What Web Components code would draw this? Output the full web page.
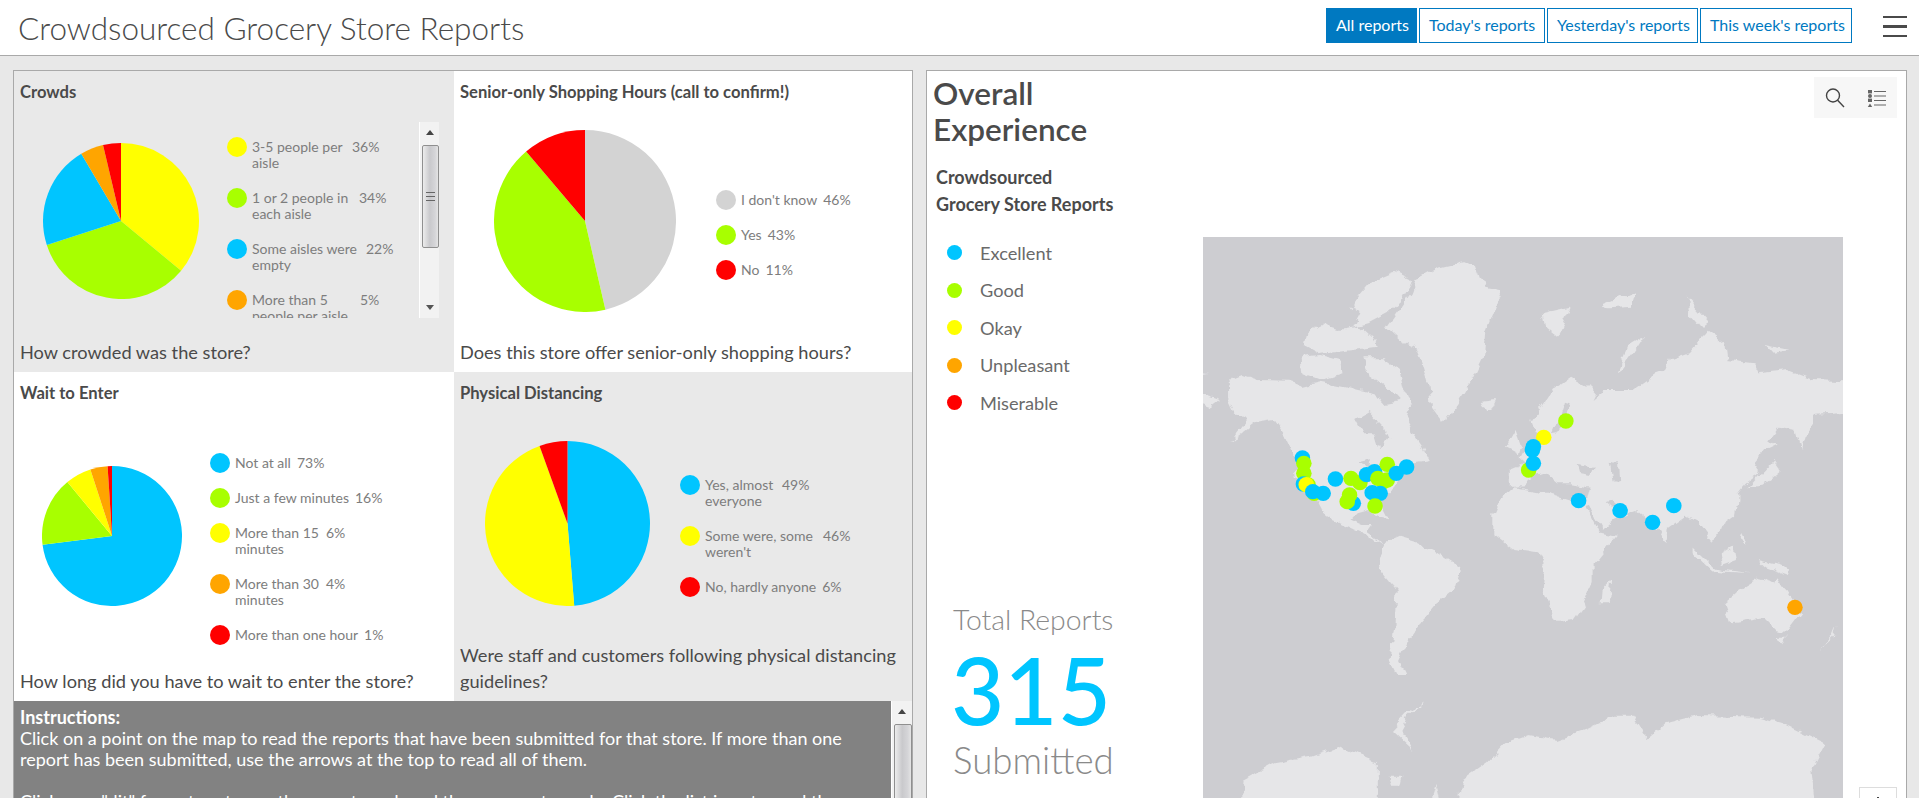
<!DOCTYPE html>
<html>
<head>
<meta charset="utf-8">
<title>Crowdsourced Grocery Store Reports</title>
<style>
  html,body{ margin:0; height:100%; overflow:hidden; background:#e8e8e8; }
  body{ font-family:Lato,"Liberation Sans",sans-serif; color:#4a4a4a; }
</style>
</head>
<body>

<app-shell>
  <report-header slot="header"></report-header>

  <chart-grid slot="left">
    <chart-card tone="grey" title="Crowds" note="How crowded was the store?" pie-left="29" pie-size="156" legend-gap="28"
      values="36,34,21.5,4.8,3.7" colors="yellow,green,blue,orange,red" scroll>
      <legend-row color="yellow" pct="36%" width="94">3-5 people per aisle</legend-row>
      <legend-row color="green" pct="34%" width="101">1 or 2 people in each aisle</legend-row>
      <legend-row color="blue" pct="22%" width="108">Some aisles were empty</legend-row>
      <legend-row color="orange" pct="5%" width="102">More than 5 people per aisle</legend-row>
      <legend-row color="red" pct="4%" width="102">Too many people</legend-row>
    </chart-card>
    <chart-card title="Senior-only Shopping Hours (call to confirm!)" note="Does this store offer senior-only shopping hours?" pie-left="40" pie-size="182" legend-gap="40" legend-top="28"
      values="46.4,42.4,11.2" colors="gray,green,red">
      <legend-row color="gray" pct="46%">I don't know</legend-row>
      <legend-row color="green" pct="43%">Yes</legend-row>
      <legend-row color="red" pct="11%">No</legend-row>
    </chart-card>
    <chart-card title="Wait to Enter" note="How long did you have to wait to enter the store?" pie-left="28" pie-size="140" legend-gap="28"
      values="73,16,6,4,1" colors="blue,green,yellow,orange,red">
      <legend-row color="blue" pct="73%">Not at all</legend-row>
      <legend-row color="green" pct="16%">Just a few minutes</legend-row>
      <legend-row color="yellow" pct="6%" width="85">More than 15 minutes</legend-row>
      <legend-row color="orange" pct="4%" width="85">More than 30 minutes</legend-row>
      <legend-row color="red" pct="1%">More than one hour</legend-row>
    </chart-card>
    <chart-card tone="grey" title="Physical Distancing" note="Were staff and customers following physical distancing guidelines?" pie-left="31" pie-size="165" legend-gap="30"
      values="48.7,45.8,5.5" colors="blue,yellow,red">
      <legend-row color="blue" pct="49%" width="71">Yes, almost everyone</legend-row>
      <legend-row color="yellow" pct="46%" width="112">Some were, some weren't</legend-row>
      <legend-row color="red" pct="6%">No, hardly anyone</legend-row>
    </chart-card>
    <info-panel>
      <b>Instructions:</b><br>
      Click on a point on the map to read the reports that have been submitted for that store. If more than one report has been submitted, use the arrows at the top to read all of them.<br><br>
      Click on a "dit" for a store to see the reports and read the comments made. Click the list icon to read them.
    </info-panel>
  </chart-grid>

  <map-panel slot="right"></map-panel>
</app-shell>

<template id="fake-scrollbar-tpl">
  <style>
    :host{ display:block; flex:none; width:var(--bar-w,20px); background:#f2f2f2; border-left:1px solid #fff; box-sizing:border-box; position:relative; }
    .arrow{ position:absolute; left:50%; margin-left:-4px; width:0; height:0; border-left:4px solid transparent; border-right:4px solid transparent; }
    .up{ top:8px; border-bottom:5px solid #444; }
    .down{ bottom:8px; border-top:5px solid #555; }
    .thumb{ position:absolute; left:2px; right:0; top:var(--thumb-top,23px); height:var(--thumb-h,103px); box-sizing:border-box; border:1px solid #8f8f8f; border-radius:2px;
      background:linear-gradient(90deg,#ececec,#c9c9cc 45%,#d5d5d8 80%,#e4e4e4); display:grid; place-items:center; }
    .grip{ width:9px; height:7px; border-top:1px solid #666; border-bottom:1px solid #666; position:relative; }
    .grip::after{ content:""; position:absolute; left:0; right:0; top:3px; height:1px; background:#666; }
  </style>
  <div class="arrow up"></div>
  <div class="thumb"><div class="grip"></div></div>
  <div class="arrow down"></div>
</template>

<script>
const COLORS = {
  yellow:"#ffff00", green:"#a8ff00", blue:"#00c5ff",
  orange:"#ffa500", red:"#ff0000", gray:"#d3d3d3"
};

class AppShell extends HTMLElement {
  constructor(){
    super();
    this.attachShadow({ mode:"open" });
    this.shadowRoot.innerHTML = `
      <style>
        :host{ display:block; height:798px; overflow:hidden; }
        .main{
          display:grid;
          grid-template-columns:900px 981px;
          column-gap:13px;
          padding:14px 12px 0 13px;
          align-items:start;
        }
      </style>
      <slot name="header"></slot>
      <div class="main">
        <slot name="left"></slot>
        <slot name="right"></slot>
      </div>
    `;
  }
}

class ReportHeader extends HTMLElement {
  constructor(){
    super();
    this.attachShadow({ mode:"open" });
    this.shadowRoot.innerHTML = `
      <style>
        :host{
          display:flex;
          align-items:center;
          height:55px;
          background:#fff;
          border-top:1px solid #e6e6e6;
          border-bottom:1px solid #a9a9a9;
          padding:0 12px 0 18px;
          margin-top:-1px;
        }
        h1{ margin:0; flex:1; font-size:31.5px; font-weight:300; color:#4a4a4a; white-space:nowrap; }
        nav{ display:flex; gap:2px; margin:-4px 31px 0 0; }
        a{
          display:block;
          box-sizing:border-box;
          height:35px;
          line-height:32px;
          padding:0 9px;
          font-size:16px;
          color:#0079c1;
          background:#fff;
          border:1px solid #0079c1;
          white-space:nowrap;
        }
        a.on{ background:#0079c1; color:#fff; }
        .burger{ display:grid; row-gap:7px; width:24px; margin-top:-2px; }
        .burger i{ display:block; height:2.5px; background:#4a4a4a; }
      </style>
      <h1>Crowdsourced Grocery Store Reports</h1>
      <nav>
        <a class="on" style="width:91px">All reports</a>
        <a style="width:126px">Today's reports</a>
        <a style="width:151px">Yesterday's reports</a>
        <a style="width:152px">This week's reports</a>
      </nav>
      <div class="burger"><i></i><i></i><i></i></div>
    `;
  }
}

class ChartGrid extends HTMLElement {
  constructor(){
    super();
    this.attachShadow({ mode:"open" });
    this.shadowRoot.innerHTML = `
      <style>
        :host{
          display:grid;
          grid-template-columns:440px 458px;
          grid-template-rows:301px 329px 1fr;
          width:900px;
          height:745px;
          box-sizing:border-box;
          border:1px solid #a9a9a9;
          background:#fff;
          overflow:hidden;
        }
        ::slotted(info-panel){ grid-column:1 / 3; }
      </style>
      <slot></slot>
    `;
  }
}

class ChartCard extends HTMLElement {
  constructor(){
    super();
    this.attachShadow({ mode:"open" });
    this.shadowRoot.innerHTML = `
      <style>
        :host{
          display:flex;
          flex-direction:column;
          min-width:0;
          padding:0 6px;
          background:#fff;
        }
        :host([tone="grey"]){ background:#e9e9e9; }
        h2{
          margin:0;
          height:44px;
          line-height:42px;
          font-size:16.6px;
          font-weight:700;
          color:#4a4a4a;
          white-space:nowrap;
        }
        .chart{
          flex:1;
          min-height:0;
          display:flex;
          align-items:center;
          margin:0 -6px;
        }
        svg{ display:block; flex:none; }
        .legend{ display:grid; row-gap:19px; margin-top:26px; }
        .view{
          display:flex;
          height:196px;
          align-self:flex-start;
          margin-top:7px;
          flex:1;
          margin-right:15px;
        }
        .view .clip{ flex:1; overflow:hidden; margin-left:-2px; padding-left:2px; }
        .view .legend{ margin-top:17px; }
        p{
          margin:0;
          padding:12px 0 7px;
          font-size:18.2px;
          line-height:26px;
          color:#4a4a4a;
        }
      </style>
      <h2></h2>
      <div class="chart"></div>
      <p></p>
    `;
  }

  connectedCallback(){
    const root = this.shadowRoot;
    root.querySelector("h2").textContent = this.getAttribute("title");
    this.removeAttribute("title");
    root.querySelector("p").textContent = this.getAttribute("note");

    const size = +this.getAttribute("pie-size");
    const chart = root.querySelector(".chart");
    const pie = this.buildPie(size);
    pie.style.marginLeft = this.getAttribute("pie-left") + "px";
    pie.style.marginRight = this.getAttribute("legend-gap") + "px";
    chart.append(pie);

    if(this.hasAttribute("scroll")){
      const view = document.createElement("div");
      view.className = "view";
      view.innerHTML = `<div class="clip"><div class="legend"><slot></slot></div></div><fake-scrollbar></fake-scrollbar>`;
      chart.append(view);
    } else {
      const legend = document.createElement("div");
      legend.className = "legend";
      legend.innerHTML = "<slot></slot>";
      if(this.hasAttribute("legend-top")){
        legend.style.marginTop = this.getAttribute("legend-top") + "px";
      }
      chart.append(legend);
    }
  }

  buildPie(size){
    const values = this.getAttribute("values").split(",").map(Number);
    const colors = this.getAttribute("colors").split(",");
    const total = values.reduce((a,b) => a + b, 0);
    const r = size / 2;
    let angle = 0;
    let paths = "";
    values.forEach((v,i) => {
      const start = angle;
      angle += v / total * Math.PI * 2;
      const x1 = r + r * Math.sin(start), y1 = r - r * Math.cos(start);
      const x2 = r + r * Math.sin(angle), y2 = r - r * Math.cos(angle);
      const large = angle - start > Math.PI ? 1 : 0;
      paths += `<path fill="${COLORS[colors[i]]}" d="M${r} ${r}L${x1} ${y1}A${r} ${r} 0 ${large} 1 ${x2} ${y2}Z"/>`;
    });
    const holder = document.createElement("div");
    holder.innerHTML = `<svg width="${size}" height="${size}" viewBox="0 0 ${size} ${size}">${paths}</svg>`;
    return holder.firstElementChild;
  }
}

class LegendRow extends HTMLElement {
  constructor(){
    super();
    this.attachShadow({ mode:"open" });
    this.shadowRoot.innerHTML = `
      <style>
        :host{
          display:flex;
          align-items:flex-start;
          font-size:14px;
          line-height:16px;
          color:#7d7d7d;
        }
        .dot{ flex:none; width:20px; height:20px; border-radius:50%; margin:-2px 5px -2px 0; }
        .pct{ margin-left:6px; flex:none; }
        .label{ flex:none; }
      </style>
      <span class="dot"></span>
      <span class="label"><slot></slot></span>
      <span class="pct"></span>
    `;
  }

  connectedCallback(){
    const root = this.shadowRoot;
    root.querySelector(".dot").style.background = COLORS[this.getAttribute("color")];
    root.querySelector(".pct").textContent = this.getAttribute("pct");
    if(this.hasAttribute("width")){
      root.querySelector(".label").style.width = this.getAttribute("width") + "px";
    }
  }
}

class FakeScrollbar extends HTMLElement {
  constructor(){
    super();
    this.attachShadow({ mode:"open" });
    this.shadowRoot.append(document.getElementById("fake-scrollbar-tpl").content.cloneNode(true));
  }
}

class InfoPanel extends HTMLElement {
  constructor(){
    super();
    this.attachShadow({ mode:"open" });
    this.shadowRoot.innerHTML = `
      <style>
        :host{ display:flex; min-width:0; background:#e9e9e9; --bar-w:21px; --thumb-top:23px; --thumb-h:300px; }
        .text{
          flex:1;
          background:#828282;
          color:#fff;
          padding:6px 6px 0;
          font-size:18px;
          line-height:21px;
        }
      </style>
      <div class="text"><slot></slot></div>
      <fake-scrollbar></fake-scrollbar>
    `;
  }
}

class MapPanel extends HTMLElement {
  constructor(){
    super();
    this.attachShadow({ mode:"open" });
    this.shadowRoot.innerHTML = `
      <style>
        :host{
          display:flex;
          position:relative;
          width:981px;
          height:745px;
          box-sizing:border-box;
          border:1px solid #a9a9a9;
          background:#fff;
          overflow:hidden;
        }
        .side{ width:276px; flex:none; display:flex; flex-direction:column; padding-left:6px; box-sizing:border-box; }
        h2{ margin:4px 0 0; font-size:31.5px; font-weight:600; line-height:36px; color:#4a4a4a; width:170px; }
        h3{ margin:17px 0 0 3px; font-size:18px; font-weight:700; line-height:27px; color:#4a4a4a; }
        ul{ list-style:none; margin:22px 0 0 14px; padding:0; display:grid; row-gap:12.6px; }
        li{ display:flex; align-items:center; gap:18px; height:25px; font-size:18.2px; color:#6a6a6a; }
        li i{ width:15px; height:15px; border-radius:50%; flex:none; }
        .total{ margin:190px 0 0 20px; color:#8a8a8a; }
        .total div{ line-height:1; }
        .total .a{ font-size:28.4px; font-weight:300; }
        .total .n{ font-size:92px; color:#00c5ff; font-weight:500; margin:10px 0 6px -2px; }
        .total .b{ font-size:36.7px; font-weight:300; }
        .map{ margin-top:166px; width:640px; height:561px; flex:none; display:block; }
        .tools{
          position:absolute;
          top:6px; right:9px;
          width:83px; height:41px;
          background:#f7f7f7;
          display:flex;
          align-items:center;
          justify-content:space-around;
        }
        .zoom{
          position:absolute;
          top:716px; right:9px;
          width:38px; height:38px;
          background:#fff;
          border:1px solid #ddd;
          box-sizing:border-box;
          display:grid;
          place-items:center;
        }
      </style>
      <div class="side">
        <h2>Overall Experience</h2>
        <h3>Crowdsourced<br>Grocery Store Reports</h3>
        <ul>
          <li><i style="background:#00c5ff"></i>Excellent</li>
          <li><i style="background:#a8ff00"></i>Good</li>
          <li><i style="background:#ffff00"></i>Okay</li>
          <li><i style="background:#ffa500"></i>Unpleasant</li>
          <li><i style="background:#ff0000"></i>Miserable</li>
        </ul>
        <div class="total">
          <div class="a">Total Reports</div>
          <div class="n">315</div>
          <div class="b">Submitted</div>
        </div>
      </div>
      ${this.mapSvg()}
      <div class="tools">
        <svg width="22" height="22" viewBox="0 0 22 22" fill="none" stroke="#444" stroke-width="1.4"><circle cx="9" cy="8.5" r="6.5"/><path d="M13.6 13.2 20 20"/></svg>
        <svg width="20" height="20" viewBox="0 0 20 20" fill="#666" stroke="none"><rect x="1" y="2" width="4" height="3.4"/><circle cx="3" cy="8" r="2"/><rect x="1" y="10.6" width="4" height="3.4"/><path d="M3 15.4 5.2 19H.8Z"/><path d="M7 3h12v1H7zM7 7.6h12v1H7zM7 12h12v1H7zM7 16.6h12v1H7z"/></svg>
      </div>
      <div class="zoom">
        <svg width="20" height="20" viewBox="0 0 20 20" stroke="#444" stroke-width="2"><path d="M10 1v18M1 10h18"/></svg>
      </div>
    `;
  }

  mapSvg(){
    const land = [
      // north america
      "100,470 115,445 132,435 165,450 228,452 262,468 300,455 345,468 380,480 415,490 432,522 470,512 495,524 480,572 495,610 512,645 528,690 492,700 470,745 455,770 435,790 425,820 442,868 420,860 400,840 375,850 362,870 385,885 405,885 395,905 420,930 436,945 410,928 375,902 340,880 300,840 285,800 250,740 245,680 225,620 200,570 160,580 105,640 145,565 115,545 100,500",
      // greenland
      "600,97 545,115 500,150 490,190 465,240 440,290 470,330 500,350 515,400 530,470 535,530 560,578 580,540 605,490 625,440 645,380 650,300 675,210 684,180 650,170 640,130",
      // arctic islands
      "455,123 410,150 385,190 365,230 385,250 370,290 400,280 440,250 465,220 495,150",
      "270,310 300,280 340,300 380,290 410,330 420,350 300,372 265,345",
      "255,380 300,375 340,390 345,430 300,450 260,430",
      "385,385 430,385 465,420 475,480 495,520 480,530 440,470 400,430",
      "640,515 675,510 665,540 650,540",
      "770,250 830,230 800,320 775,290",
      "985,320 950,350 925,430 935,420 965,365",
      "900,220 970,180 960,230 910,235",
      "1075,200 1125,280 1105,290 1075,240",
      "1245,345 1295,360 1260,368",
      // south america
      "465,920 500,935 535,960 595,1015 580,1080 545,1120 510,1180 485,1230 465,1290 480,1335 460,1335 445,1290 455,1190 460,1080 425,1020 420,985 440,935",
      // africa
      "665,855 680,805 710,772 780,790 830,810 865,830 880,880 890,910 925,920 880,1000 880,1050 860,1120 835,1170 800,1175 770,1080 775,1010 760,970 710,960 665,910",
      // eurasia
      "700,770 700,720 735,700 720,680 735,640 772,612 755,600 748,570 790,480 830,440 870,470 885,495 880,510 905,480 960,480 1000,440 1030,425 1040,390 1080,370 1120,305 1155,340 1160,390 1215,400 1225,430 1290,420 1345,450 1440,455 1440,545 1345,555 1322,660 1310,600 1270,590 1250,630 1262,645 1240,660 1215,700 1230,730 1200,762 1185,790 1185,815 1180,860 1140,900 1130,935 1100,880 1075,860 1035,900 1030,940 1005,880 970,840 950,850 920,870 890,910 870,870 860,825 850,790 800,770 760,760 720,770",
      // uk, japan
      "690,650 710,600 720,640 715,670",
      "1205,775 1260,690 1275,720 1232,770",
      // far east over the left edge
      "20,480 85,510 65,532 20,510",
      "20,425 58,432 20,442",
      // indonesia
      "1090,950 1140,1020 1130,1025 1090,970",
      "1145,975 1175,950 1180,990 1150,1005",
      "1130,1015 1210,1030 1130,1022",
      "1190,910 1205,950 1185,930",
      "1225,990 1295,1015 1290,1035 1240,1010",
      // australia, tasmania, nz, madagascar
      "1230,1045 1265,1060 1270,1045 1300,1110 1320,1150 1290,1205 1265,1200 1240,1165 1170,1180 1155,1120 1190,1080",
      "1275,1220 1290,1220 1280,1240",
      "1395,1185 1390,1220 1360,1260 1385,1220",
      "915,1050 910,1120 893,1120 895,1080",
      // antarctica
      "590,1760 600,1650 650,1600 690,1540 740,1515 800,1530 860,1500 920,1460 960,1460 990,1530 1030,1480 1100,1455 1230,1460 1280,1480 1370,1540 1340,1620 1350,1760",
      "130,1760 135,1650 200,1600 280,1580 340,1550 420,1600 420,1760",
      "445,1640 470,1640 465,1670 450,1670",
      "525,1760 545,1665 560,1760",
      "515,1420 485,1460 470,1500 495,1560 450,1500 490,1440"
    ].map(p => `<polygon fill="#e6e6e8" points="${p}"/>`).join("");

    const water = [
      "370,570 400,545 430,590 440,620 425,655 415,610 385,610",
      "840,705 880,712 875,735 845,730",
      "912,698 930,705 932,752 918,748",
      "815,515 825,520 815,570 800,610 790,612 805,560",
      "722,775 745,745 775,730 800,760 830,760 870,770 862,815 830,805 785,785 712,768",
      "862,828 870,825 900,905 892,912",
      "905,815 915,812 945,850 935,855",
      "380,700 410,690 405,715"
    ].map(p => `<polygon fill="#cdcdd1" points="${p}"/>`).join("");

    const b = COLORS.blue, g = COLORS.green, y = COLORS.yellow;
    const pts = [
      [260,684,b],[263,730,g],[263,700,g],[262,762,b],[272,765,g],[268,764,y],[285,790,g],
      [304,790,b],[282,785,b],[330,747,b],[363,745,g],[382,758,g],[413,725,b],[396,734,b],
      [440,703,g],[420,745,g],[440,750,g],[432,755,g],[459,730,b],[481,711,b],[425,790,b],
      [408,788,b],[368,820,b],[360,795,g],[355,815,g],[414,828,g],
      [772,622,y],[750,650,b],[748,660,b],[819,573,g],[740,720,g],[750,700,b],
      [846,812,b],[934,842,b],[1048,827,b],[1003,877,b],[1305,1132,COLORS.orange]
    ].map(([x,yy,c]) => `<ellipse cx="${x}" cy="${yy}" rx="16.5" ry="23" fill="${c}"/>`).join("");

    // rough coastlines: the turbulence breaks up the straight polygon edges
    return `<svg class="map" viewBox="49 21 1358 1683" preserveAspectRatio="none" style="background:#cdcdd1">
      <defs>
        <filter id="coast" x="0" y="0" width="1500" height="1800" filterUnits="userSpaceOnUse" primitiveUnits="userSpaceOnUse">
          <feTurbulence type="fractalNoise" baseFrequency="0.035 0.025" numOctaves="3" seed="4" result="n"/>
          <feDisplacementMap in="SourceGraphic" in2="n" scale="26" xChannelSelector="R" yChannelSelector="G"/>
          <feGaussianBlur stdDeviation="1 1.4"/>
        </filter>
      </defs>
      <g filter="url(#coast)">${land}${water}</g>
      ${pts}
    </svg>`;
  }
}

customElements.define("app-shell", AppShell);
customElements.define("report-header", ReportHeader);
customElements.define("chart-grid", ChartGrid);
customElements.define("chart-card", ChartCard);
customElements.define("legend-row", LegendRow);
customElements.define("fake-scrollbar", FakeScrollbar);
customElements.define("info-panel", InfoPanel);
customElements.define("map-panel", MapPanel);
</script>

</body>
</html>
